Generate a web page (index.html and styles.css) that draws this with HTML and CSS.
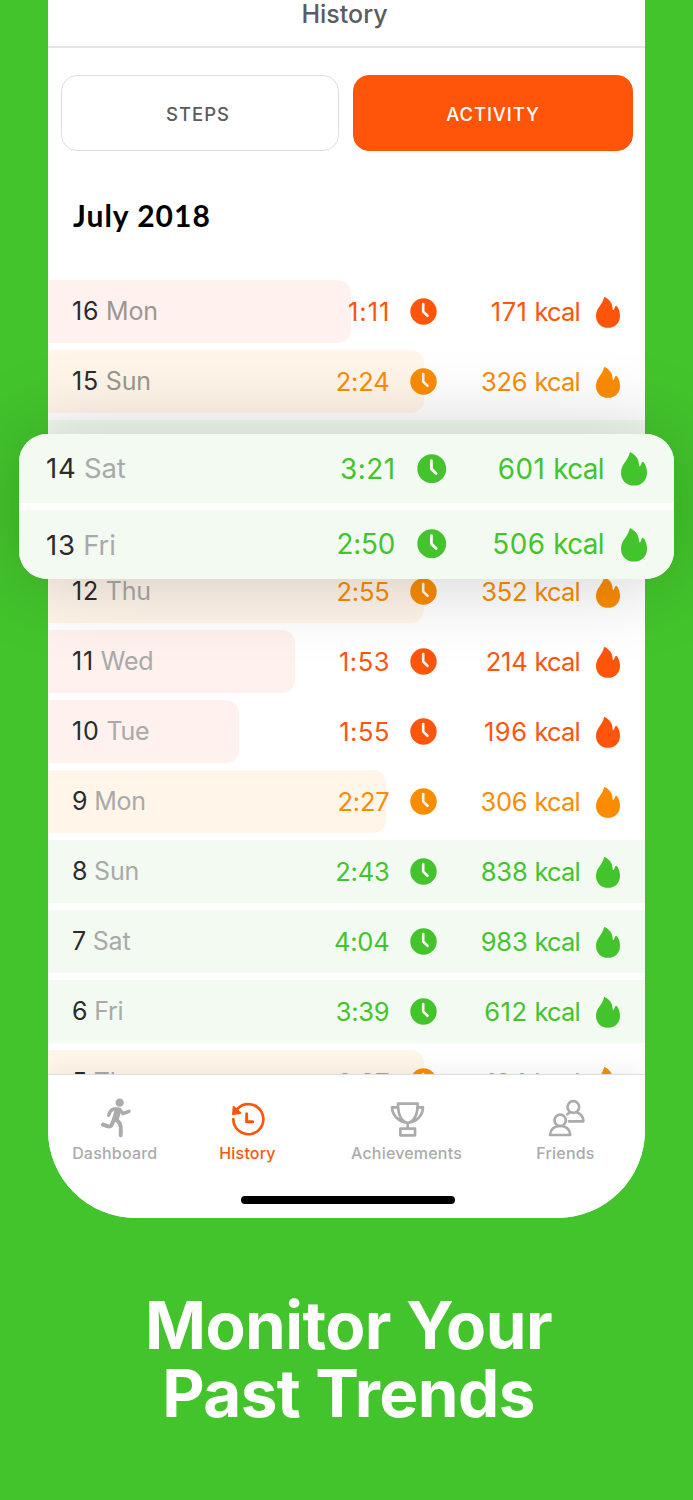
FILE: index.html
```
<!DOCTYPE html>
<html lang="en">
<head>
<meta charset="utf-8">
<title>Monitor Your Past Trends</title>
<link rel="stylesheet" href="styles.css">
</head>
<body>
<svg class="defs" width="0" height="0" aria-hidden="true">
  <symbol id="clock" viewBox="0 0 27 27"><circle cx="13.5" cy="13.5" r="13.2" fill="currentColor"/><path d="M13.2 6V13.6L17.5 17.8" fill="none" stroke="#fffaf5" stroke-width="2.6" stroke-linecap="round" stroke-linejoin="round"/></symbol>
  <symbol id="flame" viewBox="0 0 24 31"><path fill="currentColor" d="M8 .4C7.300 3.600 5.300 7 3 10.200C.9 13 0 15.800 0 18.900C0 25.900 5 30.800 12 30.800S24 25.900 24 18.900C24 15 22.900 11.700 21 9.200Q20.300 8.400 19.600 9.100C18.600 10 18.700 12.100 17.600 12.900Q16.600 13.300 16.600 11.800C16.500 6.500 14 3 9.200.2Q8.300-.3 8 .4Z"/></symbol>
</svg>
<main class="stage">
  <section class="phone">
    <header class="nav">History</header>
    <div class="segments"><button class="segment">STEPS</button><button class="segment active">ACTIVITY</button></div>
    <h2 class="month">July 2018</h2>
    <div class="list">
      <div class="row red"><i class="bar" style="width:302.5px"></i><span class="day dark"><b class="wide">16</b> Mon</span><span class="time wider">1:11</span><svg class="clock"><use href="#clock"/></svg><span class="kcal"><span class="wide">171</span> <span class="unit">kcal</span></span><svg class="flame"><use href="#flame"/></svg></div>
      <div class="row amber"><i class="bar" style="width:375.5px"></i><span class="day dark"><b class="wide">15</b> Sun</span><span class="time">2:24</span><svg class="clock"><use href="#clock"/></svg><span class="kcal">326 <span class="unit">kcal</span></span><svg class="flame"><use href="#flame"/></svg></div>
      <div class="row green"><i class="bar full"></i></div>
      <div class="row green"><i class="bar full"></i></div>
      <div class="row amber"><i class="bar" style="width:375.5px"></i><span class="day"><b class="wide">12</b> Thu</span><span class="time">2:55</span><svg class="clock"><use href="#clock"/></svg><span class="kcal">352 <span class="unit">kcal</span></span><svg class="flame"><use href="#flame"/></svg></div>
      <div class="row red"><i class="bar" style="width:247px"></i><span class="day"><b class="wide">11</b> Wed</span><span class="time wide">1:53</span><svg class="clock"><use href="#clock"/></svg><span class="kcal">214 <span class="unit">kcal</span></span><svg class="flame"><use href="#flame"/></svg></div>
      <div class="row red"><i class="bar" style="width:191px"></i><span class="day"><b class="wide">10</b> Tue</span><span class="time wide">1:55</span><svg class="clock"><use href="#clock"/></svg><span class="kcal"><span class="wide">196</span> <span class="unit">kcal</span></span><svg class="flame"><use href="#flame"/></svg></div>
      <div class="row amber"><i class="bar" style="width:337.5px"></i><span class="day"><b>9</b> Mon</span><span class="time">2:27</span><svg class="clock"><use href="#clock"/></svg><span class="kcal">306 <span class="unit">kcal</span></span><svg class="flame"><use href="#flame"/></svg></div>
      <div class="row green"><i class="bar full"></i><span class="day"><b>8</b> Sun</span><span class="time">2:43</span><svg class="clock"><use href="#clock"/></svg><span class="kcal">838 <span class="unit">kcal</span></span><svg class="flame"><use href="#flame"/></svg></div>
      <div class="row green"><i class="bar full"></i><span class="day"><b>7</b> Sat</span><span class="time">4:04</span><svg class="clock"><use href="#clock"/></svg><span class="kcal">983 <span class="unit">kcal</span></span><svg class="flame"><use href="#flame"/></svg></div>
      <div class="row green"><i class="bar full"></i><span class="day"><b>6</b> Fri</span><span class="time">3:39</span><svg class="clock"><use href="#clock"/></svg><span class="kcal"><span class="wide">612</span> <span class="unit">kcal</span></span><svg class="flame"><use href="#flame"/></svg></div>
      <div class="row amber cut"><i class="bar" style="width:375.5px"></i><span class="day"><b>5</b> Thu</span><span class="time">2:37</span><svg class="clock"><use href="#clock"/></svg><span class="kcal">194 <span class="unit">kcal</span></span><svg class="flame"><use href="#flame"/></svg></div>
    </div>
    <footer class="dock">
      <nav class="tabs">
        <a class="tab"><svg width="30" height="40" viewBox="182 175 90 120" fill="none" stroke="currentColor" stroke-linecap="round" stroke-linejoin="round"><circle cx="238" cy="189" r="12.500" fill="currentColor" stroke="none"/><path stroke-width="20" d="M232 215L226 236"/><path stroke-width="10" d="M234 208H221Q210 210 205 227M238 209L248 222L266 215"/><path stroke-width="12" d="M221 239L213 258Q210 264 188 255M227 238L237 250Q243 256 241 287"/></svg><span>Dashboard</span></a>
        <a class="tab on"><svg width="35" height="35" viewBox="576 185 105 105" fill="none" stroke="currentColor" stroke-linecap="round" stroke-linejoin="round"><path stroke-width="8" d="M595 206A45 45 0 1 1 583 236"/><path stroke-width="9" d="M623 220V244H641"/><path stroke-width="6" fill="currentColor" d="M584 200L582 221L604 218Z"/></svg><span>History</span></a>
        <a class="tab"><svg width="35" height="36" viewBox="150 182 105 108" fill="none" stroke="currentColor" stroke-width="8" stroke-linejoin="round"><path d="M174 190H233C233 222 222 243 203 248C184 243 174 222 174 190ZM174 201H156C157 224 174 244 203 248M232 201H249C248 224 232 244 203 248M203 248V264M181 265H225V285H181Z"/></svg><span>Achievements</span></a>
        <a class="tab"><svg width="38" height="38" viewBox="626 178 114 114" fill="none" stroke="currentColor" stroke-width="8" stroke-linecap="round" stroke-linejoin="round"><circle cx="702" cy="202" r="17.500"/><path d="M684 224Q688 220 693 218M712 218C725 223 732 232 732 245H689"/><circle cx="662.500" cy="242" r="17"/><path d="M632 286C634 267 643 259 662.500 259S691 267 693 286Z"/></svg><span>Friends</span></a>
      </nav>
      <div class="home"></div>
    </footer>
  </section>
  <section class="callout">
    <div class="row green big"><span class="day"><b class="wide">14</b> Sat</span><span class="time wide">3:21</span><svg class="clock"><use href="#clock"/></svg><span class="kcal"><span class="wide">601</span> <span class="unit">kcal</span></span><svg class="flame"><use href="#flame"/></svg></div>
    <div class="row green big last"><span class="day"><b class="wide">13</b> Fri</span><span class="time">2:50</span><svg class="clock"><use href="#clock"/></svg><span class="kcal"><span class="wide">506</span> <span class="unit">kcal</span></span><svg class="flame"><use href="#flame"/></svg></div>
  </section>
  <h1 class="headline">Monitor Your<br>Past Trends</h1>
</main>
</body>
</html>
```
FILE: styles.css
```
* { box-sizing: border-box; }
body { margin: 0; background: #43c42c; font-family: Inter, "Liberation Sans", sans-serif; }
.defs { position: absolute; }
.stage { position: relative; width: 693px; height: 1500px; overflow: hidden; }
.phone { width: 597px; height: 1218px; margin: 0 auto; background: #fff; border-radius: 0 0 88px 88px; overflow: hidden; display: flex; flex-direction: column; }
.nav { height: 48px; flex: none; border-bottom: 2px solid #e6e6e6; text-align: center; font-size: 25px; line-height: 28px; font-weight: 500; color: #5b5b60; padding-right: 4px; }
.segments { flex: none; display: grid; grid-template-columns: 278px 280px; gap: 14px; padding: 27px 0 0 13px; }
.segment { height: 76px; border: 1.500px solid #dedede; border-radius: 16px; background: #fff; font: 500 18.500px/1 Inter, sans-serif; letter-spacing: 1px; color: #5b5b60; padding: 2px 4px 0 0; }
.segment.active { background: #ff550a; border-color: #ff550a; color: #fff; padding-right: 0; letter-spacing: .9px; }
.month { flex: none; margin: 0; padding: 46px 0 0 25px; height: 129px; font: 700 30px/36px Lato, sans-serif; color: #000; letter-spacing: 1px; }
.list { height: 794px; flex: none; overflow: hidden; display: flex; flex-direction: column; gap: 7px; }
.row { position: relative; height: 63px; flex: none; display: flex; align-items: center; padding: 0 25px 0 24px; font-size: 25.500px; }
.row > * { position: relative; flex: none; }
.row .bar { position: absolute; left: 0; top: 0; height: 63px; border-radius: 0 13px 13px 0; }
.row .bar.full { width: 100%; border-radius: 0; }
.red { color: #ff550a; }
.amber { color: #fb8c00; }
.green { color: #43c42c; }
.red .bar { background: #fff1ed; }
.amber .bar { background: #fff5e9; }
.green .bar { background: #f2faf1; }
.row .day { flex: 1; font-size: 25px; color: #a9a9a9; padding-bottom: 2px; letter-spacing: -.2px; }
.row .day.dark { color: #9c9692; }
.day b { font-weight: 400; color: #2b2b2e; }
.day b.wide { letter-spacing: .8px; }
.row .time { letter-spacing: -.2px; margin-right: -.6px; }
.wide, .row .time.wide { letter-spacing: .5px; }
.row .time.wide { margin-right: -1px; }
.row .time.wider { letter-spacing: 1px; margin-right: -1.500px; }
.row .clock { width: 27px; height: 27px; margin-left: 20.600px; }
.kcal { width: 143.500px; text-align: right; white-space: nowrap; letter-spacing: -.2px; }
.unit { letter-spacing: -.8px; }
.row .flame { width: 24px; height: 31px; margin-left: 16px; top: .5px; }
.cut .day, .cut .time, .cut .kcal { padding-top: 2px; }
.dock { position: relative; height: 144px; flex: none; border-top: 1.500px solid #dedede; background: #fff; box-shadow: 0 0 26px rgba(0,0,0,.08); }
.tabs { display: grid; grid-template-columns: 133.500px 132px 186px 132px; height: 88px; }
.tab { display: flex; flex-direction: column; align-items: center; justify-content: flex-end; height: 88px; color: #ababab; }
.tab svg { margin: 0 0 0 2px; }
.tab span { font-size: 16px; line-height: 20px; font-weight: 500; letter-spacing: .2px; margin-top: 5px; }
.tab:nth-child(n+2) span { margin-top: 6px; }
.tab.on { color: #ff550a; }
.home { width: 214px; height: 8px; border-radius: 4px; background: #000; margin: 33px 0 0 193px; }
.callout { position: absolute; left: 19px; top: 434px; width: 655px; height: 144.500px; border-radius: 28px; background: #fff; overflow: hidden; display: grid; grid-template-rows: 69px 69px; gap: 6.500px; box-shadow: 0 0 85px rgba(0,0,0,.2); }
.row.big { height: 69px; background: #f2faf1; padding: 0 27px; font-size: 27.800px; }
.row.big .day { font-size: 27.500px; }
.row.big.last .day { padding: 1px 0 0; }
.row.big .clock { width: 29.500px; height: 29.500px; margin-left: 22.500px; }
.big .kcal { width: 157.500px; letter-spacing: 0; }
.big .unit { letter-spacing: -.6px; }
.row.big .flame { width: 26px; height: 34px; margin-left: 17px; }
.headline { margin: 74px 0 0; text-align: center; font-size: 65.500px; line-height: 68px; font-weight: 700; color: #fff; padding-left: 4px; letter-spacing: -.55px; }
```
